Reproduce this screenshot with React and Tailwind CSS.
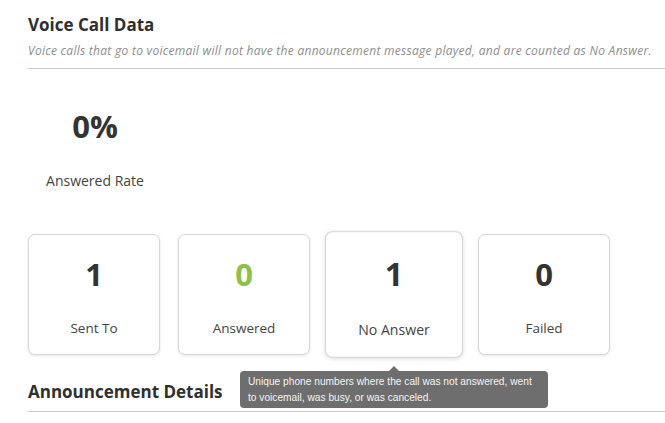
import React from 'react';

const stats = [
  { value: '1', label: 'Sent To' },
  { value: '0', label: 'Answered', green: true },
  { value: '1', label: 'No Answer', hovered: true },
  { value: '0', label: 'Failed' },
];

const StatCard = ({ value, label, green, hovered }) => (
  <div
    className={`w-[132px] h-[121px] bg-white rounded-[7px] border border-[#d6d6d6] flex flex-col items-center pt-[19px] ${
      hovered ? 'scale-[1.045] shadow-[0_1px_4px_rgba(0,0,0,0.14)]' : 'shadow-[0_1px_3px_rgba(0,0,0,0.10)]'
    }`}
  >
    <span className={`text-[31px] leading-[40px] font-bold ${green ? 'text-[#8cc04a]' : 'text-[#333]'}`}>{value}</span>
    <span className="mt-[24px] text-[13.5px] leading-[20px] text-[#444]">{label}</span>
  </div>
);

const App = () => {
  return (
    <div className="w-[665px] h-[423px] overflow-hidden bg-white pl-[28px] font-['Open_Sans',sans-serif] text-[#333]">
      {/* Voice Call Data header */}
      <h2 className="pt-[13px] text-[17px] leading-[24px] font-bold text-[#2f2f2f]">Voice Call Data</h2>
      <p className="mt-[6px] text-[12px] leading-[16px] italic tracking-[0.28px] text-[#8e8e8e] whitespace-nowrap">
        Voice calls that go to voicemail will not have the announcement message played, and are counted as No Answer.
      </p>
      <div className="mt-[9px] h-px bg-[#cdcdcd]" />

      {/* Answered rate */}
      <div className="w-[134px] flex flex-col items-center">
        <span className="mt-[39px] text-[31px] leading-[36px] font-bold text-[#333]">0%</span>
        <span className="mt-[27px] text-[14px] leading-[20px] text-[#444]">Answered Rate</span>
      </div>

      {/* Stat cards */}
      <div className="mt-[43px] flex gap-[18px]">
        {stats.map((s) => (
          <div key={s.label} className="relative">
            <StatCard {...s} />
            {s.hovered && (
              <div className="absolute top-[calc(100%+16px)] left-1/2 -translate-x-1/2 z-10 w-[308px]">
                <div className="absolute -top-[5px] left-1/2 -translate-x-1/2 w-0 h-0 border-l-[5px] border-r-[5px] border-b-[5px] border-l-transparent border-r-transparent border-b-[#6e6e6e]" />
                <div className="bg-[#6e6e6e] rounded-[4px] px-[8px] py-[3px] text-[10.2px] leading-[15.5px] text-[#f4f4f4] font-['Liberation_Sans',Arial,sans-serif] whitespace-nowrap">
                  Unique phone numbers where the call was not answered, went
                  <br />
                  to voicemail, was busy, or was canceled.
                </div>
              </div>
            )}
          </div>
        ))}
      </div>

      {/* Announcement Details */}
      <h2 className="mt-[25px] text-[17px] leading-[24px] font-bold text-[#2f2f2f]">Announcement Details</h2>
      <div className="mt-[7px] h-px bg-[#cdcdcd]" />
    </div>
  );
};

export default App;
